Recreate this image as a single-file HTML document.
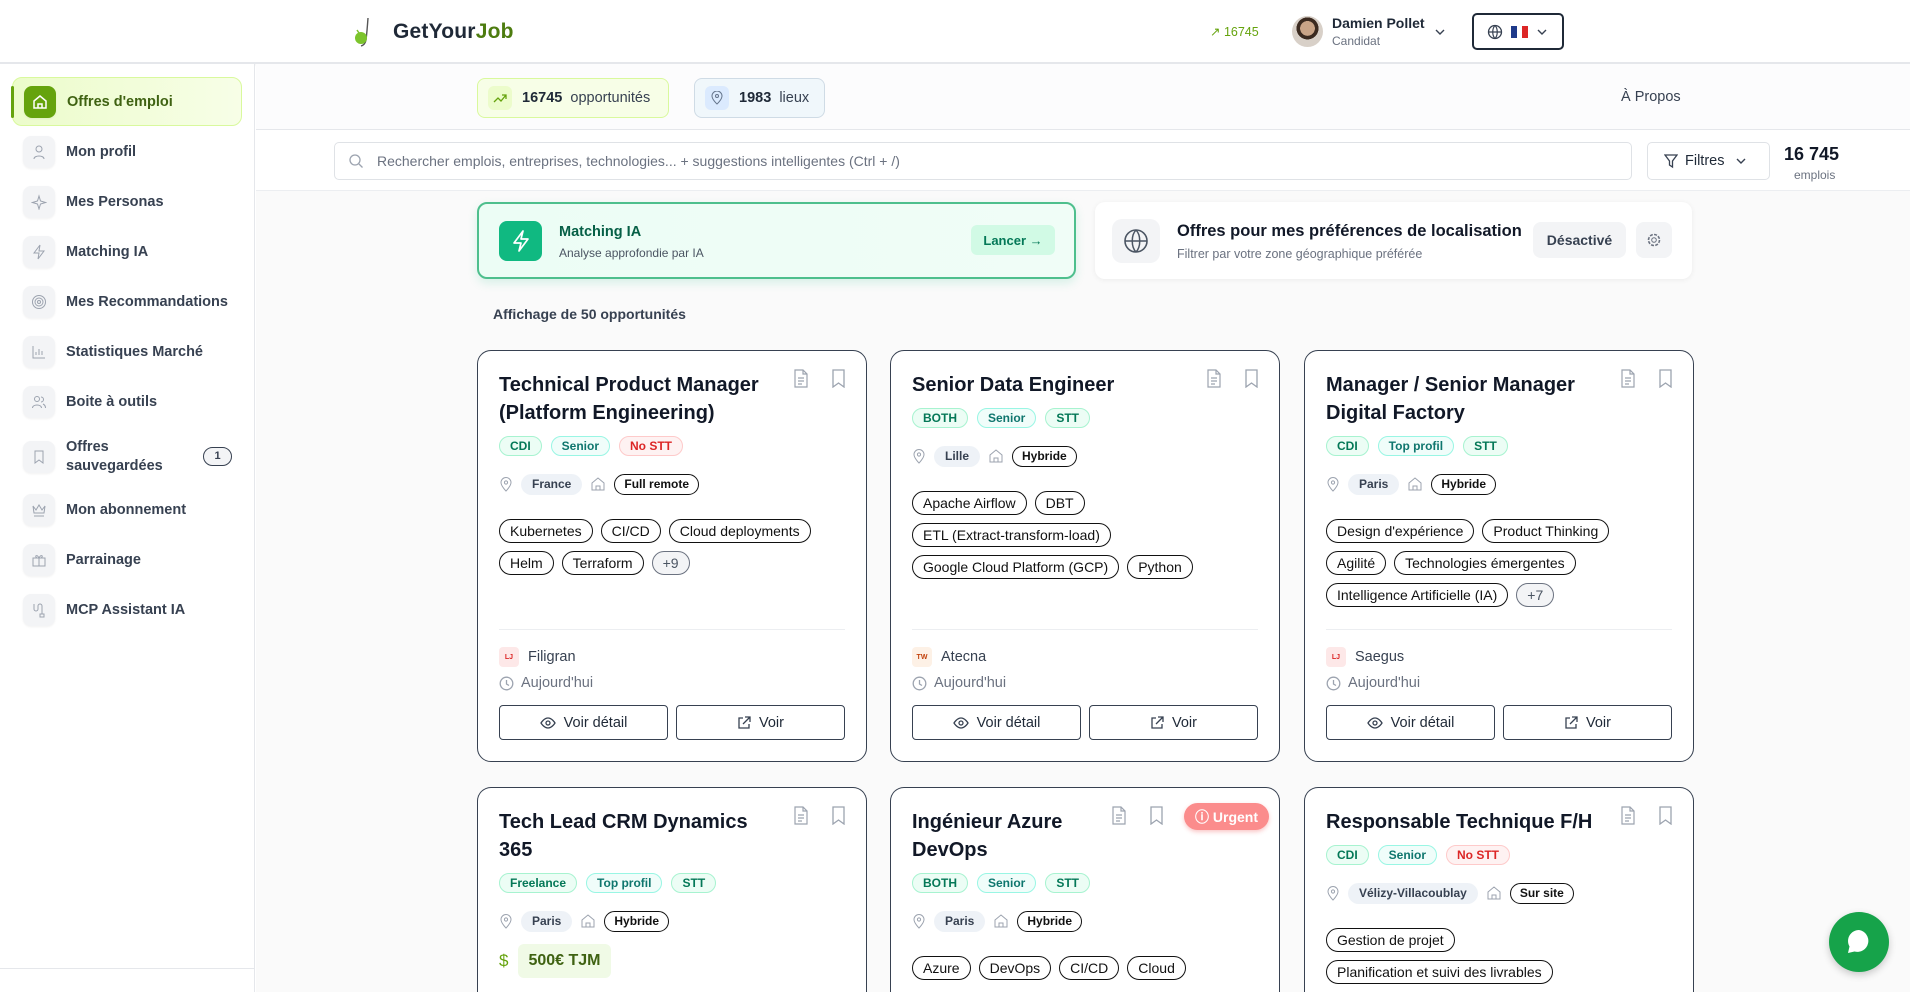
<!DOCTYPE html>
<html><head><meta charset="utf-8">
<style>
*{box-sizing:border-box;margin:0;padding:0}
html,body{width:1910px;height:992px;overflow:hidden}
body{font-family:"Liberation Sans",sans-serif;color:#1f2937;background:#fff}
#root{position:relative;width:1910px;height:992px;overflow:hidden}
.abs{position:absolute}
svg{display:block}
.hdr{left:0;top:0;width:1910px;height:64px;background:#fff;border-bottom:2px solid #e5e7eb;box-shadow:0 1px 3px rgba(0,0,0,.05)}
.side{left:0;top:64px;width:255px;height:928px;border-right:1px solid #e5e7eb;background:#fff}
.nav{position:absolute;left:12px;width:230px;height:46px;display:flex;align-items:center;font-size:14.5px;color:#374151;font-weight:bold}
.nav .ib{width:32px;height:32px;border-radius:8px;background:#f3f4f6;margin-left:11px;margin-right:11px;display:flex;align-items:center;justify-content:center;box-shadow:0 1px 2px rgba(0,0,0,.06)}
.main{left:256px;top:64px;width:1654px;height:928px;background:#fafafa}
.pill{height:40px;border-radius:8px;display:flex;align-items:center;font-size:14.5px;color:#374151;padding-left:10px}
.pill .ic{width:24px;height:24px;border-radius:6px;display:flex;align-items:center;justify-content:center;margin-right:10px}
.card{position:absolute;width:390px;height:412px;border:1.5px solid #374151;border-radius:14px;background:#fff;padding:20px 20px 0 21px;overflow:hidden}
.card.r2{height:205px;border-bottom:none;border-radius:14px 14px 0 0}
.card h3{font-size:20px;line-height:28px;font-weight:bold;color:#111827;width:270px}
.tags{display:flex;gap:9px;margin-top:9px}
.tag{height:20px;border-radius:10px;font-size:12px;font-weight:bold;padding:0 10px;display:flex;align-items:center;border:1px solid}
.g{background:#ecfdf5;border-color:#a7f3d0;color:#047857}
.t{background:#f0fdfa;border-color:#99f6e4;color:#0f766e}
.r{background:#fef2f2;border-color:#fecaca;color:#dc2626}
.loc{display:flex;align-items:center;gap:8px;margin-top:16px;height:24px}
.lc{height:21px;border-radius:11px;background:#eef2f7;font-size:12px;font-weight:bold;color:#374151;padding:0 11px;display:flex;align-items:center}
.wm{height:21px;border-radius:11px;border:1.3px solid #111;font-size:12px;font-weight:bold;color:#111;padding:0 9px;display:flex;align-items:center}
.skills{margin-top:23px;display:flex;flex-wrap:wrap;gap:8px 8px;width:350px}
.sk{height:24px;border-radius:12px;border:1.3px solid #111;font-size:14px;color:#111;padding:0 10px;display:flex;align-items:center}
.sk.more{background:#f3f4f6;border-color:#6b7280;color:#4b5563}
.foot{position:absolute;left:21px;right:21px;top:278px;border-top:1px solid #eceef1}
.co{display:flex;align-items:center;gap:9px;margin-top:17px;font-size:14.5px;color:#374151}
.logo{width:20px;height:20px;border-radius:4px;background:#fde8e8;font-size:7px;color:#dc2626;display:flex;align-items:center;justify-content:center;font-weight:bold}
.dt{display:flex;align-items:center;gap:7px;margin-top:8px;font-size:14.5px;color:#6b7280}
.btns{display:flex;gap:8px;margin-top:14px}
.btn{flex:1;height:35px;border:1.8px solid #374151;border-radius:4px;display:flex;align-items:center;justify-content:center;gap:8px;font-size:14.5px;color:#1f2937}
.acts{position:absolute;top:18px;right:20px;display:flex;gap:22px}
</style></head><body><div id="root">

<div class="abs hdr">
  <svg class="abs" style="left:352px;top:16px" width="24" height="32" viewBox="0 0 24 32"><path d="M16 2 Q15 16 14 24 Q13 29 9 30" stroke="#555" stroke-width="1.4" fill="none"/><circle cx="9" cy="22" r="6" fill="#7cc42c"/><path d="M5 14 l2 3" stroke="#7cc42c" stroke-width="1.5"/></svg>
  <div class="abs" style="left:393px;top:20px;font-size:21px;font-weight:bold;color:#1f2937;letter-spacing:.2px">GetYour<span style="color:#4d7c0f">Job</span></div>
  <div class="abs" style="left:1210px;top:24px;font-size:12.5px;color:#65a30d">↗ 16745</div>
  <div class="abs" style="left:1292px;top:16px;width:31px;height:31px;border-radius:50%;background:radial-gradient(circle at 50% 40%,#c9a487 0 30%,#3b2a20 31% 45%,#d8d0c8 46%);"></div>
  <div class="abs" style="left:1332px;top:15px;font-size:14px;font-weight:bold;color:#1f2937">Damien Pollet</div>
  <div class="abs" style="left:1332px;top:34px;font-size:12px;color:#6b7280">Candidat</div>
  <svg class="abs" style="left:1434px;top:26px" width="12" height="12" viewBox="0 0 12 12"><path d="M2 4l4 4 4-4" stroke="#374151" stroke-width="1.4" fill="none"/></svg>
  <div class="abs" style="left:1472px;top:13px;width:92px;height:37px;border:2px solid #1f2937;border-radius:5px;display:flex;align-items:center;padding-left:13px;gap:8px">
    <svg width="16" height="16" viewBox="0 0 16 16"><circle cx="8" cy="8" r="6.5" stroke="#374151" stroke-width="1.3" fill="none"/><path d="M1.5 8h13M8 1.5c-3 3-3 10 0 13M8 1.5c3 3 3 10 0 13" stroke="#374151" stroke-width="1.2" fill="none"/></svg>
    <div style="display:flex;width:17px;height:12px"><div style="flex:1;background:#1e3a8a"></div><div style="flex:1;background:#fff"></div><div style="flex:1;background:#dc2626"></div></div>
    <svg width="12" height="12" viewBox="0 0 12 12"><path d="M2 4l4 4 4-4" stroke="#374151" stroke-width="1.4" fill="none"/></svg>
  </div>
</div>

<div class="abs side">
  <div class="nav" style="top:13px;height:49px;background:linear-gradient(90deg,#ecfccb,#f7fee7);border:1.5px solid #d9f99d;border-radius:10px;color:#3f6212">
    <div style="position:absolute;left:-2px;top:8px;width:3px;height:32px;background:#65a30d;border-radius:2px"></div>
    <div class="ib" style="background:#65a30d;margin-left:11px"><svg width="18" height="18" viewBox="0 0 18 18"><path d="M3 8l6-5 6 5v7H3z M7 15v-4h4v4" stroke="#fff" stroke-width="1.5" fill="none"/></svg></div>Offres d'emploi</div>
  <div class="nav" style="top:65px"><div class="ib"><svg width="16" height="16"><circle cx="8" cy="5" r="3" stroke="#9ca3af" fill="none"/><path d="M3 15c0-4 10-4 10 0" stroke="#9ca3af" fill="none"/></svg></div>Mon profil</div>
  <div class="nav" style="top:115px"><div class="ib"><svg width="16" height="16"><path d="M8 2l1.5 5 5 1.5-5 1.5L8 15 6.5 10 1.5 8.5l5-1.5z" stroke="#9ca3af" fill="none"/></svg></div>Mes Personas</div>
  <div class="nav" style="top:165px"><div class="ib"><svg width="16" height="16"><path d="M9 1L3 9h5l-1 6 6-8H8z" stroke="#9ca3af" fill="none"/></svg></div>Matching IA</div>
  <div class="nav" style="top:215px"><div class="ib"><svg width="16" height="16"><circle cx="8" cy="8" r="6.5" stroke="#9ca3af" fill="none"/><circle cx="8" cy="8" r="4" stroke="#9ca3af" fill="none"/><circle cx="8" cy="8" r="1.5" stroke="#9ca3af" fill="none"/></svg></div>Mes Recommandations</div>
  <div class="nav" style="top:265px"><div class="ib"><svg width="16" height="16"><path d="M2 2v12h12M5 11V8M8 11V5M11 11V7" stroke="#9ca3af" fill="none"/></svg></div>Statistiques Marché</div>
  <div class="nav" style="top:315px"><div class="ib"><svg width="16" height="16"><circle cx="6" cy="5" r="2.5" stroke="#9ca3af" fill="none"/><path d="M1.5 14c0-4 9-4 9 0M10 3a2.5 2.5 0 010 5M12 10c2 1 2.5 2 2.5 4" stroke="#9ca3af" fill="none"/></svg></div>Boite à outils</div>
  <div class="nav" style="top:370px;line-height:19px"><div class="ib"><svg width="16" height="16"><path d="M4 2h8v12l-4-3-4 3z" stroke="#9ca3af" fill="none"/></svg></div>Offres<br>sauvegardées<div style="position:absolute;left:191px;top:13px;width:29px;height:19px;border:1.3px solid #374151;border-radius:10px;background:#f3f4f6;font-size:11px;display:flex;align-items:center;justify-content:center">1</div></div>
  <div class="nav" style="top:423px"><div class="ib"><svg width="16" height="16"><path d="M2 4l3 4 3-5 3 5 3-4-1 7H3zM3 14h10" stroke="#9ca3af" fill="none"/></svg></div>Mon abonnement</div>
  <div class="nav" style="top:473px"><div class="ib"><svg width="16" height="16"><rect x="2" y="6" width="12" height="8" stroke="#9ca3af" fill="none"/><path d="M1.5 6h13M8 6v8M8 6C6 2 3 4 6 6M8 6c2-4 5-2 2 0" stroke="#9ca3af" fill="none"/></svg></div>Parrainage</div>
  <div class="nav" style="top:523px"><div class="ib"><svg width="16" height="16"><path d="M3 2v5a2 2 0 004 0V4a2 2 0 014 0v8M9 12h4v3H9z" stroke="#9ca3af" fill="none"/></svg></div>MCP Assistant IA</div>
  <div style="position:absolute;left:0;top:904px;width:255px;border-top:1px solid #e5e7eb"></div>
</div>

<div class="abs main">
  <div class="abs" style="left:0;top:0;width:1654px;height:66px;background:#fcfcfd;border-bottom:1px solid #e5e7eb"></div>
  <div class="abs pill" style="left:221px;top:14px;width:192px;background:#f7fee7;border:1.5px solid #d9f99d"><div class="ic" style="background:#ecfccb"><svg width="14" height="14"><path d="M1 11l4-4 3 3 5-6M9 4h4v4" stroke="#65a30d" stroke-width="1.3" fill="none"/></svg></div><b style="color:#1f2937">16745</b>&nbsp; opportunités</div>
  <div class="abs pill" style="left:438px;top:14px;width:131px;background:#f0f7fb;border:1.5px solid #cfdbe5"><div class="ic" style="background:#dbeafe"><svg width="14" height="14"><path d="M7 13s-5-4.5-5-8a5 5 0 0110 0c0 3.5-5 8-5 8z" stroke="#64748b" fill="none"/><circle cx="7" cy="5" r="1.5" stroke="#64748b" fill="none"/></svg></div><b style="color:#1f2937">1983</b>&nbsp; lieux</div>
  <div class="abs" style="left:1365px;top:25px;font-size:14.5px;color:#374151">À Propos</div>
  <div class="abs" style="left:0;top:66px;width:1654px;height:61px;background:#fff;border-bottom:1px solid #eceef1"></div>
  <div class="abs" style="left:78px;top:78px;width:1298px;height:38px;background:#fff;border:1.5px solid #dfe2e6;border-radius:5px;display:flex;align-items:center;padding-left:13px;font-size:14px;color:#6b7280">
    <svg width="16" height="16" style="margin-right:13px"><circle cx="7" cy="7" r="5" stroke="#9ca3af" stroke-width="1.3" fill="none"/><path d="M11 11l3.5 3.5" stroke="#9ca3af" stroke-width="1.3"/></svg>Rechercher emplois, entreprises, technologies... + suggestions intelligentes (Ctrl + /)</div>
  <div class="abs" style="left:1391px;top:78px;width:123px;height:38px;background:#fff;border:1.5px solid #dfe2e6;border-radius:5px;display:flex;align-items:center;padding-left:16px;gap:7px;font-size:14.5px;color:#1f2937">
    <svg width="14" height="16"><path d="M1 2h12L8.5 8v6L5.5 12V8z" stroke="#374151" stroke-width="1.3" fill="none"/></svg>Filtres<svg width="12" height="12" style="margin-left:4px"><path d="M2 4l4 4 4-4" stroke="#374151" stroke-width="1.4" fill="none"/></svg></div>
  <div class="abs" style="left:1528px;top:80px;font-size:18px;font-weight:bold;color:#111827">16 745</div>
  <div class="abs" style="left:1538px;top:104px;font-size:12px;color:#6b7280">emplois</div>

  <div class="abs" style="left:221px;top:138px;width:599px;height:77px;background:linear-gradient(90deg,#ecfdf5,#f0fdf7);border:2px solid #4ebf8d;border-radius:10px;box-shadow:0 4px 10px rgba(16,185,129,.15)">
    <div class="abs" style="left:20px;top:17px;width:43px;height:40px;background:#10b981;border-radius:8px;display:flex;align-items:center;justify-content:center"><svg width="20" height="22"><path d="M12 1L3 13h7l-2 8 9-12h-7z" stroke="#fff" stroke-width="1.7" fill="none" stroke-linejoin="round"/></svg></div>
    <div class="abs" style="left:80px;top:20px;font-size:14.5px;font-weight:bold;color:#065f46">Matching IA</div>
    <div class="abs" style="left:80px;top:42px;font-size:12px;color:#4b5563">Analyse approfondie par IA</div>
    <div class="abs" style="left:492px;top:21px;width:84px;height:30px;background:#d1fae5;border-radius:6px;display:flex;align-items:center;justify-content:center;font-size:13px;font-weight:bold;color:#047857">Lancer →</div>
  </div>
  <div class="abs" style="left:839px;top:138px;width:597px;height:77px;background:#fff;border-radius:10px;box-shadow:0 1px 6px rgba(0,0,0,.06)">
    <div class="abs" style="left:17px;top:17px;width:48px;height:44px;background:#f3f4f6;border-radius:10px;display:flex;align-items:center;justify-content:center"><svg width="26" height="26"><circle cx="13" cy="13" r="11" stroke="#4b5563" stroke-width="1.6" fill="none"/><path d="M2 13h22M13 2c-5 5-5 17 0 22M13 2c5 5 5 17 0 22" stroke="#4b5563" stroke-width="1.5" fill="none"/></svg></div>
    <div class="abs" style="left:82px;top:20px;font-size:16.5px;font-weight:bold;color:#111827">Offres pour mes préférences de localisation</div>
    <div class="abs" style="left:82px;top:45px;font-size:12.5px;color:#6b7280">Filtrer par votre zone géographique préférée</div>
    <div class="abs" style="left:438px;top:20px;width:93px;height:36px;background:#f3f4f6;border-radius:8px;display:flex;align-items:center;justify-content:center;font-size:14px;font-weight:bold;color:#374151">Désactivé</div>
    <div class="abs" style="left:541px;top:20px;width:36px;height:36px;background:#f3f4f6;border-radius:8px;display:flex;align-items:center;justify-content:center"><svg width="16" height="16"><circle cx="8" cy="8" r="2.3" stroke="#6b7280" fill="none"/><circle cx="8" cy="8" r="5.5" stroke="#6b7280" stroke-dasharray="3 1.3" stroke-width="1.6" fill="none"/></svg></div>
  </div>
  <div class="abs" style="left:237px;top:242px;font-size:14px;font-weight:bold;color:#374151">Affichage de 50 opportunités</div>
</div>

<div class="card" style="left:477px;top:350px">
  <div class="acts"><svg width="16" height="19"><path d="M2 1h8l4 4v13H2z M10 1v4h4M5 9h6M5 12h6M5 15h4" stroke="#9ca3af" stroke-width="1.2" fill="none"/></svg><svg width="15" height="19"><path d="M2 1h11v17l-5.5-4L2 18z" stroke="#9ca3af" stroke-width="1.3" fill="none"/></svg></div>
  <h3>Technical Product Manager (Platform Engineering)</h3>
  <div class="tags"><div class="tag g">CDI</div><div class="tag t">Senior</div><div class="tag r">No STT</div></div>
  <div class="loc"><svg width="14" height="16"><path d="M7 15s-5-5-5-8.5a5 5 0 0110 0C12 10 7 15 7 15z" stroke="#9ca3af" fill="none"/><circle cx="7" cy="6.5" r="1.6" stroke="#9ca3af" fill="none"/></svg><div class="lc">France</div><svg width="16" height="16"><path d="M2 7l6-5 6 5v7H2zM6 14v-4h4v4" stroke="#9ca3af" fill="none"/></svg><div class="wm">Full remote</div></div>
  <div class="skills"><div class="sk">Kubernetes</div><div class="sk">CI/CD</div><div class="sk">Cloud deployments</div><div class="sk">Helm</div><div class="sk">Terraform</div><div class="sk more">+9</div></div>
  <div class="foot"><div class="co"><div class="logo">LJ</div>Filigran</div><div class="dt"><svg width="15" height="15"><circle cx="7.5" cy="7.5" r="6.3" stroke="#9ca3af" stroke-width="1.3" fill="none"/><path d="M7.5 4v4l2.5 1.5" stroke="#9ca3af" stroke-width="1.3" fill="none"/></svg>Aujourd'hui</div>
  <div class="btns"><div class="btn"><svg width="16" height="12"><path d="M1 6s3-5 7-5 7 5 7 5-3 5-7 5-7-5-7-5z" stroke="#374151" stroke-width="1.3" fill="none"/><circle cx="8" cy="6" r="2" stroke="#374151" stroke-width="1.3" fill="none"/></svg>Voir détail</div><div class="btn"><svg width="14" height="14"><path d="M6 2H2v10h10V8M8 1h5v5M13 1L6 8" stroke="#374151" stroke-width="1.3" fill="none"/></svg>Voir</div></div></div>
</div>

<div class="card" style="left:890px;top:350px">
  <div class="acts"><svg width="16" height="19"><path d="M2 1h8l4 4v13H2z M10 1v4h4M5 9h6M5 12h6M5 15h4" stroke="#9ca3af" stroke-width="1.2" fill="none"/></svg><svg width="15" height="19"><path d="M2 1h11v17l-5.5-4L2 18z" stroke="#9ca3af" stroke-width="1.3" fill="none"/></svg></div>
  <h3>Senior Data Engineer</h3>
  <div class="tags"><div class="tag g">BOTH</div><div class="tag t">Senior</div><div class="tag g">STT</div></div>
  <div class="loc"><svg width="14" height="16"><path d="M7 15s-5-5-5-8.5a5 5 0 0110 0C12 10 7 15 7 15z" stroke="#9ca3af" fill="none"/><circle cx="7" cy="6.5" r="1.6" stroke="#9ca3af" fill="none"/></svg><div class="lc">Lille</div><svg width="16" height="16"><path d="M2 7l6-5 6 5v7H2zM6 14v-4h4v4" stroke="#9ca3af" fill="none"/></svg><div class="wm">Hybride</div></div>
  <div class="skills"><div class="sk">Apache Airflow</div><div class="sk">DBT</div><div class="sk">ETL (Extract-transform-load)</div><div class="sk">Google Cloud Platform (GCP)</div><div class="sk">Python</div></div>
  <div class="foot"><div class="co"><div class="logo" style="background:#fdf1e6;color:#c2410c">TW</div>Atecna</div><div class="dt"><svg width="15" height="15"><circle cx="7.5" cy="7.5" r="6.3" stroke="#9ca3af" stroke-width="1.3" fill="none"/><path d="M7.5 4v4l2.5 1.5" stroke="#9ca3af" stroke-width="1.3" fill="none"/></svg>Aujourd'hui</div>
  <div class="btns"><div class="btn"><svg width="16" height="12"><path d="M1 6s3-5 7-5 7 5 7 5-3 5-7 5-7-5-7-5z" stroke="#374151" stroke-width="1.3" fill="none"/><circle cx="8" cy="6" r="2" stroke="#374151" stroke-width="1.3" fill="none"/></svg>Voir détail</div><div class="btn"><svg width="14" height="14"><path d="M6 2H2v10h10V8M8 1h5v5M13 1L6 8" stroke="#374151" stroke-width="1.3" fill="none"/></svg>Voir</div></div></div>
</div>

<div class="card" style="left:1304px;top:350px">
  <div class="acts"><svg width="16" height="19"><path d="M2 1h8l4 4v13H2z M10 1v4h4M5 9h6M5 12h6M5 15h4" stroke="#9ca3af" stroke-width="1.2" fill="none"/></svg><svg width="15" height="19"><path d="M2 1h11v17l-5.5-4L2 18z" stroke="#9ca3af" stroke-width="1.3" fill="none"/></svg></div>
  <h3>Manager / Senior Manager Digital Factory</h3>
  <div class="tags"><div class="tag g">CDI</div><div class="tag t">Top profil</div><div class="tag g">STT</div></div>
  <div class="loc"><svg width="14" height="16"><path d="M7 15s-5-5-5-8.5a5 5 0 0110 0C12 10 7 15 7 15z" stroke="#9ca3af" fill="none"/><circle cx="7" cy="6.5" r="1.6" stroke="#9ca3af" fill="none"/></svg><div class="lc">Paris</div><svg width="16" height="16"><path d="M2 7l6-5 6 5v7H2zM6 14v-4h4v4" stroke="#9ca3af" fill="none"/></svg><div class="wm">Hybride</div></div>
  <div class="skills"><div class="sk">Design d'expérience</div><div class="sk">Product Thinking</div><div class="sk">Agilité</div><div class="sk">Technologies émergentes</div><div class="sk">Intelligence Artificielle (IA)</div><div class="sk more">+7</div></div>
  <div class="foot"><div class="co"><div class="logo">LJ</div>Saegus</div><div class="dt"><svg width="15" height="15"><circle cx="7.5" cy="7.5" r="6.3" stroke="#9ca3af" stroke-width="1.3" fill="none"/><path d="M7.5 4v4l2.5 1.5" stroke="#9ca3af" stroke-width="1.3" fill="none"/></svg>Aujourd'hui</div>
  <div class="btns"><div class="btn"><svg width="16" height="12"><path d="M1 6s3-5 7-5 7 5 7 5-3 5-7 5-7-5-7-5z" stroke="#374151" stroke-width="1.3" fill="none"/><circle cx="8" cy="6" r="2" stroke="#374151" stroke-width="1.3" fill="none"/></svg>Voir détail</div><div class="btn"><svg width="14" height="14"><path d="M6 2H2v10h10V8M8 1h5v5M13 1L6 8" stroke="#374151" stroke-width="1.3" fill="none"/></svg>Voir</div></div></div>
</div>

<div class="card r2" style="left:477px;top:787px">
  <div class="acts"><svg width="16" height="19"><path d="M2 1h8l4 4v13H2z M10 1v4h4M5 9h6M5 12h6M5 15h4" stroke="#9ca3af" stroke-width="1.2" fill="none"/></svg><svg width="15" height="19"><path d="M2 1h11v17l-5.5-4L2 18z" stroke="#9ca3af" stroke-width="1.3" fill="none"/></svg></div>
  <h3>Tech Lead CRM Dynamics 365</h3>
  <div class="tags"><div class="tag g">Freelance</div><div class="tag t">Top profil</div><div class="tag g">STT</div></div>
  <div class="loc"><svg width="14" height="16"><path d="M7 15s-5-5-5-8.5a5 5 0 0110 0C12 10 7 15 7 15z" stroke="#9ca3af" fill="none"/><circle cx="7" cy="6.5" r="1.6" stroke="#9ca3af" fill="none"/></svg><div class="lc">Paris</div><svg width="16" height="16"><path d="M2 7l6-5 6 5v7H2zM6 14v-4h4v4" stroke="#9ca3af" fill="none"/></svg><div class="wm">Hybride</div></div>
  <div style="display:flex;align-items:center;gap:10px;margin-top:11px"><span style="color:#65a30d;font-size:17px">$</span><div style="background:#f0fae6;border-radius:6px;padding:0 10px;height:34px;display:flex;align-items:center;font-size:16px;font-weight:bold;color:#3f6212">500€ TJM</div></div>
</div>

<div class="card r2" style="left:890px;top:787px">
  <div class="acts" style="right:10px;gap:22px;top:15px"><svg width="16" height="19" style="margin-top:3px"><path d="M2 1h8l4 4v13H2z M10 1v4h4M5 9h6M5 12h6M5 15h4" stroke="#9ca3af" stroke-width="1.2" fill="none"/></svg><svg width="15" height="19" style="margin-top:3px"><path d="M2 1h11v17l-5.5-4L2 18z" stroke="#9ca3af" stroke-width="1.3" fill="none"/></svg><div style="margin-left:-2px;height:27px;border-radius:14px;background:#fb8c8c;color:#fff;font-size:14px;font-weight:bold;padding:0 11px;display:flex;align-items:center;box-shadow:0 2px 4px rgba(239,68,68,.3)">ⓘ Urgent</div></div>
  <h3 style="width:180px">Ingénieur Azure DevOps</h3>
  <div class="tags"><div class="tag g">BOTH</div><div class="tag t">Senior</div><div class="tag g">STT</div></div>
  <div class="loc"><svg width="14" height="16"><path d="M7 15s-5-5-5-8.5a5 5 0 0110 0C12 10 7 15 7 15z" stroke="#9ca3af" fill="none"/><circle cx="7" cy="6.5" r="1.6" stroke="#9ca3af" fill="none"/></svg><div class="lc">Paris</div><svg width="16" height="16"><path d="M2 7l6-5 6 5v7H2zM6 14v-4h4v4" stroke="#9ca3af" fill="none"/></svg><div class="wm">Hybride</div></div>
  <div class="skills"><div class="sk">Azure</div><div class="sk">DevOps</div><div class="sk">CI/CD</div><div class="sk">Cloud</div></div>
</div>

<div class="card r2" style="left:1304px;top:787px">
  <div class="acts"><svg width="16" height="19"><path d="M2 1h8l4 4v13H2z M10 1v4h4M5 9h6M5 12h6M5 15h4" stroke="#9ca3af" stroke-width="1.2" fill="none"/></svg><svg width="15" height="19"><path d="M2 1h11v17l-5.5-4L2 18z" stroke="#9ca3af" stroke-width="1.3" fill="none"/></svg></div>
  <h3>Responsable Technique F/H</h3>
  <div class="tags"><div class="tag g">CDI</div><div class="tag t">Senior</div><div class="tag r">No STT</div></div>
  <div class="loc"><svg width="14" height="16"><path d="M7 15s-5-5-5-8.5a5 5 0 0110 0C12 10 7 15 7 15z" stroke="#9ca3af" fill="none"/><circle cx="7" cy="6.5" r="1.6" stroke="#9ca3af" fill="none"/></svg><div class="lc">Vélizy-Villacoublay</div><svg width="16" height="16"><path d="M2 7l6-5 6 5v7H2zM6 14v-4h4v4" stroke="#9ca3af" fill="none"/></svg><div class="wm">Sur site</div></div>
  <div class="skills"><div class="sk">Gestion de projet</div><div class="sk">Planification et suivi des livrables</div></div>
</div>

<div class="abs" style="left:1829px;top:912px;width:60px;height:60px;border-radius:50%;background:#16a34a;display:flex;align-items:center;justify-content:center;box-shadow:0 3px 8px rgba(0,0,0,.2)">
  <svg width="30" height="30" viewBox="0 0 30 30"><path d="M15 3a11 11 0 00-9.5 16.5L4 26l6.5-1.5A11 11 0 1015 3z" fill="#fff"/></svg>
</div>
</div></body></html>
